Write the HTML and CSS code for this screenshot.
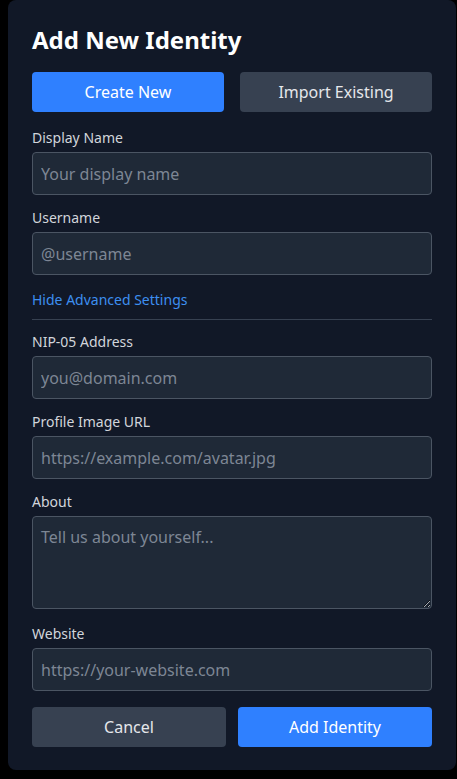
FILE: index.html
```html
<!DOCTYPE html>
<html lang="en">
<head>
<meta charset="utf-8">
<title>Add New Identity</title>
<link rel="stylesheet" href="styles.css">
</head>
<body>
<div class="card">
  <h2 class="title">Add New Identity</h2>
  <div class="tabs">
    <button class="btn btn-primary">Create New</button>
    <button class="btn btn-secondary">Import Existing</button>
  </div>
  <div class="field">
    <label class="label">Display Name</label>
    <input class="input" type="text" placeholder="Your display name">
  </div>
  <div class="field">
    <label class="label">Username</label>
    <input class="input" type="text" placeholder="@username">
  </div>
  <div class="advanced-toggle">
    <a class="link" href="#">Hide Advanced Settings</a>
  </div>
  <div class="field field-first">
    <label class="label">NIP-05 Address</label>
    <input class="input" type="text" placeholder="you@domain.com">
  </div>
  <div class="field">
    <label class="label">Profile Image URL</label>
    <input class="input" type="text" placeholder="https://example.com/avatar.jpg">
  </div>
  <div class="field">
    <label class="label">About</label>
    <textarea class="input textarea" placeholder="Tell us about yourself..."></textarea>
  </div>
  <div class="field field-after-textarea">
    <label class="label">Website</label>
    <input class="input" type="text" placeholder="https://your-website.com">
  </div>
  <div class="actions">
    <button class="btn btn-secondary">Cancel</button>
    <button class="btn btn-primary">Add Identity</button>
  </div>
</div>
</body>
</html>
```
FILE: styles.css
```css
* { box-sizing: border-box; }
html, body { margin: 0; padding: 0; }
body {
  background: #000;
  font-family: "Noto Sans", "Open Sans", sans-serif;
  color: #d1d5db;
}
.card {
  width: 448px;
  margin-left: 8px;
  background: #111827;
  border-radius: 8px;
  padding: 24px 24px 23px;
}
.title {
  margin: 0 0 16px;
  font-size: 24px;
  line-height: 32px;
  font-weight: 700;
  color: #fff;
}
.tabs {
  display: flex;
  gap: 16px;
  margin-bottom: 16px;
}
.btn {
  flex: 1;
  height: 40px;
  padding: 0;
  border: none;
  border-radius: 4px;
  font-family: inherit;
  font-size: 16px;
  line-height: 24px;
  cursor: pointer;
}
.actions .btn { padding-top: 1px; }
.btn-primary { background: #2f80ff; color: #fff; }
.btn-secondary { background: #374151; color: #e5e7eb; }
.field { margin-top: 13.3px; }
.tabs + .field { margin-top: 0; }
.field-first { margin-top: 12px; }
.field-after-textarea { margin-top: 15px; }
.label {
  display: block;
  font-size: 14px;
  line-height: 20px;
  margin-bottom: 4px;
  color: #d1d5db;
}
.input {
  display: block;
  width: 100%;
  height: 42.7px;
  background: #1f2937;
  border: 1px solid #4b5563;
  border-radius: 4px;
  padding: 1px 8px 0;
  font-family: inherit;
  font-size: 16px;
  color: #e5e7eb;
  outline: none;
}
.input::placeholder { color: #7d8694; }
.textarea {
  height: 93px;
  padding: 8px;
  line-height: 24px;
  resize: vertical;
  color-scheme: dark;
}
.advanced-toggle {
  margin-top: 15.6px;
  padding-bottom: 9px;
  border-bottom: 1px solid #374151;
}
.link {
  display: block;
  font-size: 14px;
  line-height: 20px;
  color: #3d8ff0;
  text-decoration: none;
}
.actions {
  display: flex;
  gap: 12px;
  margin-top: 16px;
}
```
